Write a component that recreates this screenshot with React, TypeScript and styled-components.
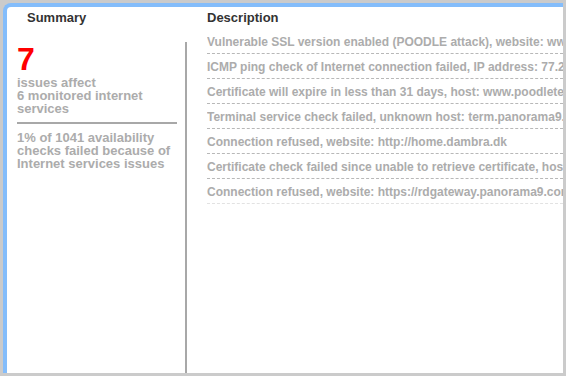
import React from 'react';
import styled, { createGlobalStyle } from 'styled-components';

const GlobalStyle = createGlobalStyle`
  html, body {
    margin: 0;
    padding: 0;
    background: #cbcbcb;
  }
  body {
    font-family: "Liberation Sans", Arial, Helvetica, sans-serif;
  }
`;

const Frame = styled.div`
  width: 566px;
  height: 376px;
  box-sizing: border-box;
  padding: 3px;
`;

const Panel = styled.div`
  height: 100%;
  box-sizing: border-box;
  background: #fff;
  border-top: 4px solid #84bdfb;
  border-left: 4px solid #84bdfb;
  border-top-left-radius: 8px;
  display: grid;
  grid-template-columns: 180px 1fr;
  overflow: hidden;
`;

const Column = styled.div`
  display: flex;
  flex-direction: column;
  min-width: 0;
  overflow: hidden;
`;

const ColumnHeader = styled.div`
  height: 22px;
  line-height: 22px;
  padding-left: 20px;
  font-size: 13px;
  font-weight: bold;
  color: #333;
  white-space: nowrap;
`;

const SummaryBody = styled.div`
  flex: 1;
  margin-top: 13px;
  padding: 0 8px 0 10px;
  border-right: 2px solid #a8a8a8;
`;

const BigCount = styled.div`
  font-size: 32px;
  line-height: 34px;
  font-weight: bold;
  color: #ff0000;
`;

const StatText = styled.div`
  font-size: 13px;
  line-height: 13px;
  font-weight: bold;
  color: #acacac;
`;

const Rule = styled.hr`
  border: none;
  height: 2px;
  background: #a8a8a8;
  margin: 7px 0 7px;
`;

const IssueList = styled.ul`
  list-style: none;
  margin: 0 0 0 20px;
  padding: 0;
`;

const IssueRow = styled.li<{ $faint?: boolean }>`
  padding: 6px 0 4px;
  line-height: 14px;
  font-size: 12px;
  font-weight: bold;
  color: #acacac;
  white-space: nowrap;
  overflow: hidden;
  border-bottom: 1px dashed ${({ $faint }) => ($faint ? '#e2e2e2' : '#b8b8b8')};
`;

const issues = [
  'Vulnerable SSL version enabled (POODLE attack), website: www.poodletest.panorama9.com',
  'ICMP ping check of Internet connection failed, IP address: 77.243.52.139',
  'Certificate will expire in less than 31 days, host: www.poodletest.panorama9.com',
  'Terminal service check failed, unknown host: term.panorama9.com',
  'Connection refused, website: http://home.dambra.dk',
  'Certificate check failed since unable to retrieve certificate, host: rdgateway.panorama9.com',
  'Connection refused, website: https://rdgateway.panorama9.com',
];

export default function App() {
  return (
    <Frame>
      <GlobalStyle />
      <Panel>
        <Column>
          <ColumnHeader>Summary</ColumnHeader>
          <SummaryBody>
            <BigCount>7</BigCount>
            <StatText>
              issues affect
              <br />
              6 monitored internet
              <br />
              services
            </StatText>
            <Rule />
            <StatText>
              1% of 1041 availability
              <br />
              checks failed because of
              <br />
              Internet services issues
            </StatText>
          </SummaryBody>
        </Column>
        <Column>
          <ColumnHeader>Description</ColumnHeader>
          <IssueList>
            {issues.map((text, i) => (
              <IssueRow key={text} $faint={i === issues.length - 1}>
                {text}
              </IssueRow>
            ))}
          </IssueList>
        </Column>
      </Panel>
    </Frame>
  );
}
